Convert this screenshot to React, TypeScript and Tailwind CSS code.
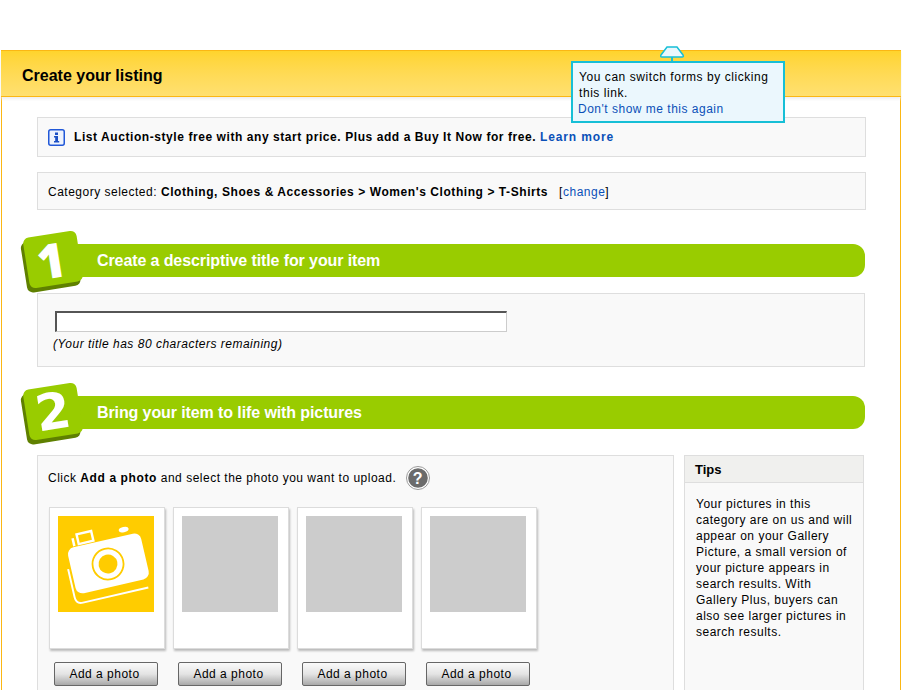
import React from 'react';

function StepHeader({ num, title, digitFont }: { num: string; title: string; digitFont: string }) {
  return (
    <div className="relative ml-[35px] mr-[35px] h-[33px] rounded-r-[12px] bg-[#99cc00] pl-[60px] text-[16px] leading-[33px] font-bold tracking-[-0.1px] text-white">
      <div
        className={`absolute left-[-11px] top-[-10px] flex h-[51px] w-[54px] rotate-[-9deg] items-center justify-center rounded-[6px] bg-[#99cc00] shadow-[-3px_4px_0_#5f8000] ${digitFont} leading-none`}
      >
        {num}
      </div>
      <span className="relative">{title}</span>
    </div>
  );
}

function CameraIcon() {
  return (
    <svg viewBox="0 0 96 96" className="h-full w-full">
      <g transform="rotate(-13 50 48)">
        <path d="M12 42 v29 q0 7 7 7 h67" fill="none" stroke="#fff" strokeWidth="2" transform="translate(-2 2)" />
        <rect x="13" y="24" width="75" height="47" rx="7" fill="#fff" />
        <circle cx="50" cy="48" r="15.5" fill="none" stroke="#fc0" strokeWidth="1.8" />
        <circle cx="50" cy="48" r="9.5" fill="#fc0" />
        <rect x="26" y="12" width="15" height="10" fill="none" stroke="#fff" strokeWidth="2.4" />
        <rect x="20" y="15" width="2.5" height="8" fill="#fff" />
        <ellipse cx="73" cy="18" rx="5" ry="2.6" fill="#fff" />
      </g>
    </svg>
  );
}

function PhotoSlot({ first }: { first?: boolean }) {
  return (
    <div className="flex w-[116px] flex-col items-center">
      <div className="h-[142px] w-[116px] border border-[#dcdcdc] bg-white p-[8px] shadow-[1px_2px_2px_#bbb]">
        <div className={first ? 'h-[96px] w-[96px] bg-[#ffcc00]' : 'h-[96px] w-[96px] bg-[#cccccc]'}>
          {first && <CameraIcon />}
        </div>
      </div>
      <button className="mt-[13px] mr-[2px] h-[24px] w-[104px] shrink-0 rounded-[2px] border border-[#666] bg-gradient-to-b from-[#fafafa] via-[#e4e4e4] to-[#a8a8a8] pr-[3px] text-[12px] tracking-[0.5px] text-black">
        Add a photo
      </button>
      {first && <div className="ml-[5px] mt-[2px] text-[11px] leading-[13px]">(FREE)</div>}
    </div>
  );
}

export default function App() {
  return (
    <div className="relative h-[690px] w-[902px] overflow-hidden bg-white pt-[50px] pl-px [font-family:'Liberation_Sans',Arial,sans-serif] text-[12px] tracking-[0.5px] text-black">
      <div className="w-[900px] border-x border-[#fbb714]">
        <div className="-mx-px h-[47px] border-y border-[#fbb714] bg-gradient-to-b from-[#ffd42c] to-[#ffe070] pl-[21px] text-[16px] leading-[49px] font-bold tracking-normal shadow-[0_2px_3px_#eee]">
          Create your listing
        </div>

        <div className="ml-[35px] mt-[20px] flex h-[40px] w-[829px] items-center border border-[#dedede] bg-[#f9f9f9] pl-[10px] font-bold tracking-[0.57px]">
          <svg width="17" height="17" viewBox="0 0 17 17" className="mr-[9px] shrink-0">
            <rect x="0.75" y="0.75" width="15.5" height="15.5" rx="2" fill="#eef3fd" stroke="#2158d8" strokeWidth="1.5" />
            <rect x="7" y="3.5" width="3" height="2.5" fill="#1b4fc4" />
            <path d="M6 7h4v5h1.200v1.500H6V12h1.200V8.500H6z" fill="#1b4fc4" />
          </svg>
          <span>
            List Auction-style free with any start price. Plus add a Buy It Now for free.{' '}
            <a className="tracking-[0.85px] text-[#0a50b8]">Learn more</a>
          </span>
        </div>

        <div className="ml-[35px] mt-[15px] flex h-[38px] w-[829px] items-center border border-[#dedede] bg-[#f9f9f9] pl-[10px] pt-[1px]">
          <span>Category selected:&nbsp;</span>
          <span className="font-bold tracking-[0.57px]">Clothing, Shoes &amp; Accessories &gt; Women's Clothing &gt; T-Shirts</span>
          <span className="ml-[11px]">
            [<a className="text-[#0a50b8]">change</a>]
          </span>
        </div>

        <div className="mt-[34px]">
          <StepHeader
            num="1"
            title="Create a descriptive title for your item"
            digitFont="[font-family:'Open_Sans',sans-serif] pr-[4px] text-[48px] font-extrabold"
          />
        </div>
        <div className="ml-[35px] mt-[16px] h-[74px] w-[828px] border border-[#dedede] bg-[#f9f9f9] pl-[15px] pt-[17px]">
          <div className="ml-[2px] h-[21px] w-[452px] border border-t-2 border-l-2 border-[#cccccc] border-t-[#555] border-l-[#555] bg-white" />
          <div className="mt-[4px] italic leading-[16px]">(Your title has 80 characters remaining)</div>
        </div>

        <div className="mt-[29px]">
          <StepHeader
            num="2"
            title="Bring your item to life with pictures"
            digitFont="[font-family:'DejaVu_Sans',sans-serif] text-[50px] font-bold"
          />
        </div>

        <div className="ml-[35px] mt-[26px] flex items-start gap-[10px]">
          <div className="h-[300px] w-[637px] border border-[#dedede] bg-[#f9f9f9] pl-[10px]">
            <div className="flex h-[43px] items-center">
              <span>
                Click <b className="tracking-[0.6px]">Add a photo</b> and select the photo you want to upload.
              </span>
              <svg width="24" height="24" viewBox="0 0 24 24" className="ml-[10px] shrink-0">
                <circle cx="12" cy="12" r="11.5" fill="#fff" stroke="#999" />
                <circle cx="12" cy="12" r="9.800" fill="#6b6b6b" />
                <text x="12" y="17.500" textAnchor="middle" fontSize="16" fontWeight="700" fill="#fff" fontFamily="Liberation Sans">
                  ?
                </text>
              </svg>
            </div>
            <div className="ml-[1px] mt-[8px] flex gap-[8px]">
              <PhotoSlot first />
              <PhotoSlot />
              <PhotoSlot />
              <PhotoSlot />
            </div>
          </div>

          <div className="h-[300px] w-[180px] border border-[#dedede] bg-[#f9f9f9]">
            <div className="h-[27px] border-b border-[#dedede] bg-[#f0f0ee] pl-[10px] text-[13px] leading-[27px] font-bold tracking-normal">
              Tips
            </div>
            <p className="pl-[11px] pr-[9px] pt-[13px] leading-[16px]">
              Your pictures in this category are on us and will appear on your Gallery Picture, a small version of your
              picture appears in search results. With Gallery Plus, buyers can also see larger pictures in search results.
            </p>
          </div>
        </div>
      </div>

      <svg width="26" height="16" viewBox="0 0 26 16" className="absolute left-[660px] top-[46px]">
        <path d="M7 1h10l6 8q1 2-1 2H2q-2 0-1-2z" fill="#eaf7fd" stroke="#17bfd6" strokeWidth="1.500" />
        <rect x="11" y="11" width="2" height="5" fill="#17bfd6" />
      </svg>
      <div className="absolute left-[571px] top-[61px] h-[62px] w-[214px] border-2 border-[#17bfd6] bg-[#ebf7fd] px-[6px] pt-[6px] leading-[16px] tracking-[0.56px]">
        You can switch forms by clicking this link.
        <br />
        <a className="ml-[-1px] tracking-[0.5px] text-[#0a50b8]">Don't show me this again</a>
      </div>
    </div>
  );
}
